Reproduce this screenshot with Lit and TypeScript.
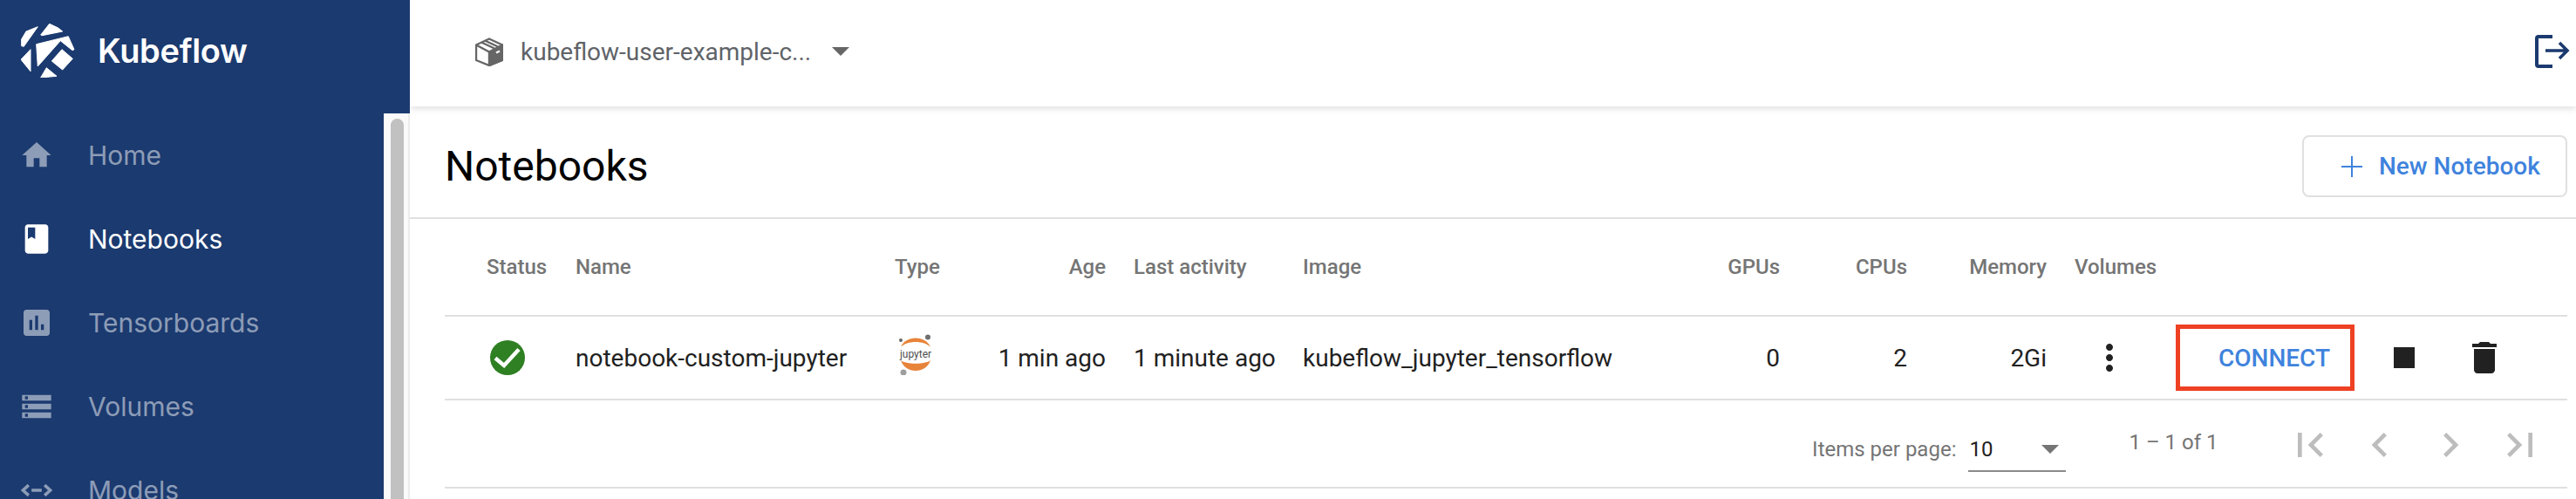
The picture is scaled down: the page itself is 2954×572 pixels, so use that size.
import { LitElement, html, css, svg } from 'lit';
import { customElement } from 'lit/decorators.js';

const navItems = [
  { label: 'Home', active: false, icon: svg`<path d="M10 20v-6h4v6h5v-8h3L12 3 2 12h3v8z"/>` },
  { label: 'Notebooks', active: true, icon: svg`<path d="M18 2H6c-1.1 0-2 .9-2 2v16c0 1.1.9 2 2 2h12c1.1 0 2-.9 2-2V4c0-1.1-.9-2-2-2zM6 4h5v8l-2.5-1.5L6 12V4z" fill-rule="evenodd"/>` },
  { label: 'Tensorboards', active: false, icon: svg`<path d="M19 3H5c-1.1 0-2 .9-2 2v14c0 1.1.9 2 2 2h14c1.1 0 2-.9 2-2V5c0-1.1-.9-2-2-2zM9 17H7v-7h2v7zm4 0h-2V7h2v10zm4 0h-2v-4h2v4z"/>` },
  { label: 'Volumes', active: false, icon: svg`<path d="M2 20h20v-4H2v4zm2-3h2v2H4v-2zM2 4v4h20V4H2zm4 3H4V5h2v2zm-4 7h20v-4H2v4zm2-3h2v2H4v-2z"/>` },
  { label: 'Models', active: false, icon: svg`<path d="M6.500 8.500 2.600 12l3.900 3.500M17.500 8.500l3.900 3.500-3.900 3.500M8.500 12h7" fill="none" stroke="currentColor" stroke-width="2.100"/>` },
];

const pagerIcons = [
  'M18.41 16.59L13.82 12l4.59-4.59L17 6l-6 6 6 6zM6 6h2v12H6z',
  'M15.41 7.41L14 6l-6 6 6 6 1.41-1.41L10.83 12z',
  'M10 6L8.59 7.41 13.17 12l-4.58 4.59L10 18l6-6z',
  'M5.59 7.41L10.18 12l-4.59 4.59L7 18l6-6-6-6zM16 6h2v12h-2z',
];

@customElement('app-root')
export class AppRoot extends LitElement {
  static styles = css`
    :host {
      display: block;
      font-family: Roboto, sans-serif;
      color: #212121;
    }
    .app {
      display: flex;
      height: 572px;
      overflow: hidden;
      background: #fff;
    }

    /* sidebar */
    .sidebar {
      width: 470px;
      flex: none;
      display: flex;
      flex-direction: column;
      background: #1b3a6f;
      position: relative;
      z-index: 2;
    }
    .brand {
      height: 130px;
      flex: none;
      display: flex;
      align-items: flex-start;
      padding: 27px 0 0 24px;
      box-sizing: border-box;
    }
    .brand svg {
      width: 62px;
      height: 62px;
      flex: none;
    }
    .brand span {
      margin: 8px 0 0 26px;
      font-family: Inter, sans-serif;
      font-size: 38px;
      line-height: 46px;
      font-weight: 600;
      color: #fff;
      letter-spacing: -0.3px;
    }
    .side-body {
      flex: 1;
      display: flex;
      min-height: 0;
    }
    .nav {
      flex: 1;
    }
    .nav-item {
      height: 96px;
      display: flex;
      align-items: center;
      padding-left: 22px;
      color: rgba(255, 255, 255, 0.5);
      font-family: Inter, sans-serif;
      font-size: 30px;
    }
    .nav-item.active {
      color: #fff;
    }
    .nav-item svg {
      width: 40px;
      height: 40px;
      fill: currentColor;
      margin-right: 39px;
      flex: none;
    }
    .scrollbar {
      width: 30px;
      flex: none;
      box-sizing: border-box;
      background: #fafafa;
      border-left: 1px solid #ececec;
      border-right: 2px solid #ececec;
      padding: 6px 5px 0 7px;
    }
    .thumb {
      height: 100%;
      background: #c1c1c1;
      border-radius: 8px 8px 0 0;
    }

    /* main column */
    .main {
      flex: 1;
      min-width: 0;
    }
    .topbar {
      height: 122px;
      display: flex;
      align-items: center;
      padding: 0 7px 4px 75px;
      box-sizing: border-box;
      box-shadow: 0 2px 8px rgba(0, 0, 0, 0.14);
      position: relative;
    }
    .box-icon {
      width: 32px;
      height: 33px;
      flex: none;
    }
    .namespace {
      margin-left: 20px;
      font-size: 28px;
      color: #5f6368;
    }
    .caret {
      width: 0;
      height: 0;
      border-left: 10px solid transparent;
      border-right: 10px solid transparent;
      border-top: 10px solid #666;
    }
    .topbar .caret {
      margin-left: 24px;
    }
    .logout {
      margin-left: auto;
      width: 40px;
      height: 38px;
    }
    .title-row {
      height: 129px;
      display: flex;
      align-items: center;
      justify-content: space-between;
      padding: 10px 10px 0 40px;
      box-sizing: border-box;
      border-bottom: 2px solid #e0e0e0;
    }
    h1 {
      margin: 0;
      font-size: 48px;
      font-weight: 400;
      color: #000;
    }
    .new-btn {
      width: 304px;
      height: 71px;
      box-sizing: border-box;
      border: 2px solid #e0e0e0;
      border-radius: 8px;
      display: flex;
      align-items: center;
      padding-left: 43px;
      color: #3f83dd;
      font-size: 28px;
      font-weight: 500;
    }
    .new-btn svg {
      width: 24px;
      height: 24px;
      margin-right: 19px;
    }

    /* table */
    .table {
      margin: 0 10px 0 40px;
    }
    .grid {
      display: grid;
      grid-template-columns: 48px 102px 366px 90px 152px 226px 400px 147px 146px 160px 148px 1fr;
      align-items: center;
      box-sizing: border-box;
      border-bottom: 2px solid #e0e0e0;
    }
    .head {
      height: 112px;
      color: #757575;
      font-size: 24px;
      font-weight: 500;
    }
    .row {
      height: 96px;
      font-size: 28px;
    }
    .right {
      text-align: right;
    }
    .pad {
      padding-left: 32px;
    }
    .status,
    .jupyter {
      display: block;
    }
    .status {
      width: 40px;
      height: 40px;
      margin-left: 4px;
    }
    .jupyter {
      width: 40px;
      height: 47px;
      margin: -8px 0 0 4px;
    }
    .dots {
      width: 48px;
      height: 48px;
      fill: #212121;
      display: block;
      margin-left: 16px;
    }
    .actions {
      display: flex;
      align-items: center;
    }
    .connect {
      width: 205px;
      height: 76px;
      box-sizing: border-box;
      border: 5px solid #ee4123;
      padding-left: 44px;
      display: flex;
      align-items: center;
      color: #3f83dd;
      font-size: 28px;
      font-weight: 500;
      margin-right: 33px;
    }
    .actions svg {
      width: 48px;
      height: 48px;
      fill: #212121;
      flex: none;
    }
    .actions svg + svg {
      margin-left: 44px;
    }
    .pager {
      height: 101px;
      box-sizing: border-box;
      border-bottom: 2px solid #e0e0e0;
      display: flex;
      justify-content: flex-end;
      align-items: center;
      padding-right: 26px;
      color: #757575;
      font-size: 24px;
    }
    .per-page {
      padding-top: 12px;
      margin-right: 14px;
    }
    .select {
      width: 112px;
      height: 50px;
      box-sizing: border-box;
      border-bottom: 2px solid #8a8a8a;
      display: flex;
      align-items: center;
      justify-content: space-between;
      padding: 0 8px 0 1px;
      color: #212121;
      margin: 14px 72px 0 0;
    }
    .select .caret {
      border-top-color: #757575;
    }
    .range {
      padding-bottom: 4px;
      margin-right: 77px;
    }
    .pager-btns {
      display: flex;
      gap: 24.500px;
      padding-top: 3px;
    }
    .pager-btns svg {
      width: 56px;
      height: 56px;
      fill: #bdbdbd;
      display: block;
    }
  `;

  render() {
    return html`
      <div class="app">
        <aside class="sidebar">
          <div class="brand">
            <svg viewBox="0 0 62 62" fill="#fff" stroke="#fff" stroke-width="1" stroke-linejoin="round">
              <path d="M19.300 3.700 6 9 .7 18 .7 25.700 3.300 26.300z"/>
              <path d="M32.700 .3 22.700 13 24.300 13.700 47.700 9 42.700 5z"/>
              <path d="M17.700 23.700 54.300 14.700 61 29.700 59 30.700 45.300 19.700 19.300 49z"/>
              <path d="M47 29.700 59.300 40.300 47.700 53 35.300 43z"/>
              <path d="M11 29.700 11 54.700 0 41.300z"/>
              <path d="M29.300 50.700 41 60.300 22.700 62z"/>
            </svg>
            <span>Kubeflow</span>
          </div>
          <div class="side-body">
            <nav class="nav">
              ${navItems.map(
                (item) => html`
                  <div class="nav-item ${item.active ? 'active' : ''}">
                    <svg viewBox="0 0 24 24">${item.icon}</svg>
                    ${item.label}
                  </div>
                `
              )}
            </nav>
            <div class="scrollbar"><div class="thumb"></div></div>
          </div>
        </aside>
        <div class="main">
          <header class="topbar">
            <svg class="box-icon" viewBox="0 0 32 33" fill="none" stroke="#666" stroke-width="2.400" stroke-linejoin="round">
              <path d="M16 1.500 31 8.500V26L16 32 1 26V8.500z" fill="#fff"/>
              <path d="M16 16.500 31 8.500V26L16 32z" fill="#666"/>
              <path d="M1 8.500 16 16.500M7 5.500 22 12.500M11 3.500 26 10.500" />
              <path d="M24 17.500 28 15.500" stroke="#fff" stroke-width="2"/>
            </svg>
            <span class="namespace">kubeflow-user-example-c...</span>
            <span class="caret"></span>
            <svg class="logout" viewBox="0 0 40 38" fill="none" stroke="#1b3a6f" stroke-width="4">
              <path d="M20 2H4Q2 2 2 4V34Q2 36 4 36H20" />
              <path d="M12 18H37M28 9 37 18 28 27" stroke-width="3.600"/>
            </svg>
          </header>
          <div class="title-row">
            <h1>Notebooks</h1>
            <div class="new-btn">
              <svg viewBox="0 0 24 24" fill="#3f83dd"><path d="M11 0h2v11h11v2H13v11h-2V13H0v-2h11z"/></svg>
              New Notebook
            </div>
          </div>
          <div class="table">
            <div class="grid head">
              <span></span>
              <span>Status</span>
              <span>Name</span>
              <span>Type</span>
              <span class="right">Age</span>
              <span class="pad">Last activity</span>
              <span>Image</span>
              <span class="right">GPUs</span>
              <span class="right">CPUs</span>
              <span class="right">Memory</span>
              <span class="pad">Volumes</span>
              <span></span>
            </div>
            <div class="grid row">
              <span></span>
              <span>
                <svg class="status" viewBox="0 0 40 40">
                  <circle cx="20" cy="20" r="20" fill="#2f7f23"/>
                  <path d="M6 20.500 16 29 33 10.500" fill="none" stroke="#fff" stroke-width="4.500"/>
                </svg>
              </span>
              <span>notebook-custom-jupyter</span>
              <span>
                <svg class="jupyter" viewBox="0 0 40 47">
                  <path d="M3 15C8 1 32 1 37 15 30 7 10 7 3 15z" fill="#e8833a"/>
                  <path d="M3 30C9 35 31 35 37 30 32 46 8 46 3 30z" fill="#e8833a"/>
                  <circle cx="34" cy="3.500" r="3" fill="#6f6f6f"/>
                  <circle cx="3" cy="7" r="2" fill="#666"/>
                  <circle cx="6" cy="44" r="3.500" fill="#9e9e9e"/>
                  <text x="20" y="27" text-anchor="middle" font-size="12" font-family="Roboto, sans-serif" fill="#4e4e4e">jupyter</text>
                </svg>
              </span>
              <span class="right">1 min ago</span>
              <span class="pad">1 minute ago</span>
              <span>kubeflow_jupyter_tensorflow</span>
              <span class="right">0</span>
              <span class="right">2</span>
              <span class="right">2Gi</span>
              <span class="pad">
                <svg class="dots" viewBox="0 0 24 24"><path d="M12 8c1.100 0 2-.9 2-2s-.9-2-2-2-2 .9-2 2 .9 2 2 2zm0 2c-1.100 0-2 .9-2 2s.9 2 2 2 2-.9 2-2-.9-2-2-2zm0 6c-1.100 0-2 .9-2 2s.9 2 2 2 2-.9 2-2-.9-2-2-2z"/></svg>
              </span>
              <span class="actions">
                <span class="connect">CONNECT</span>
                <svg viewBox="0 0 24 24"><path d="M6 6h12v12H6z"/></svg>
                <svg viewBox="0 0 24 24"><path d="M6 19c0 1.100.9 2 2 2h8c1.100 0 2-.9 2-2V7H6v12zM19 4h-3.500l-1-1h-5l-1 1H5v2h14V4z"/></svg>
              </span>
            </div>
            <div class="pager">
              <span class="per-page">Items per page:</span>
              <div class="select"><span>10</span><span class="caret"></span></div>
              <span class="range">1 – 1 of 1</span>
              <div class="pager-btns">
                ${pagerIcons.map((d) => html`<svg viewBox="0 0 24 24"><path d=${d}></path></svg>`)}
              </div>
            </div>
          </div>
        </div>
      </div>
    `;
  }
}
